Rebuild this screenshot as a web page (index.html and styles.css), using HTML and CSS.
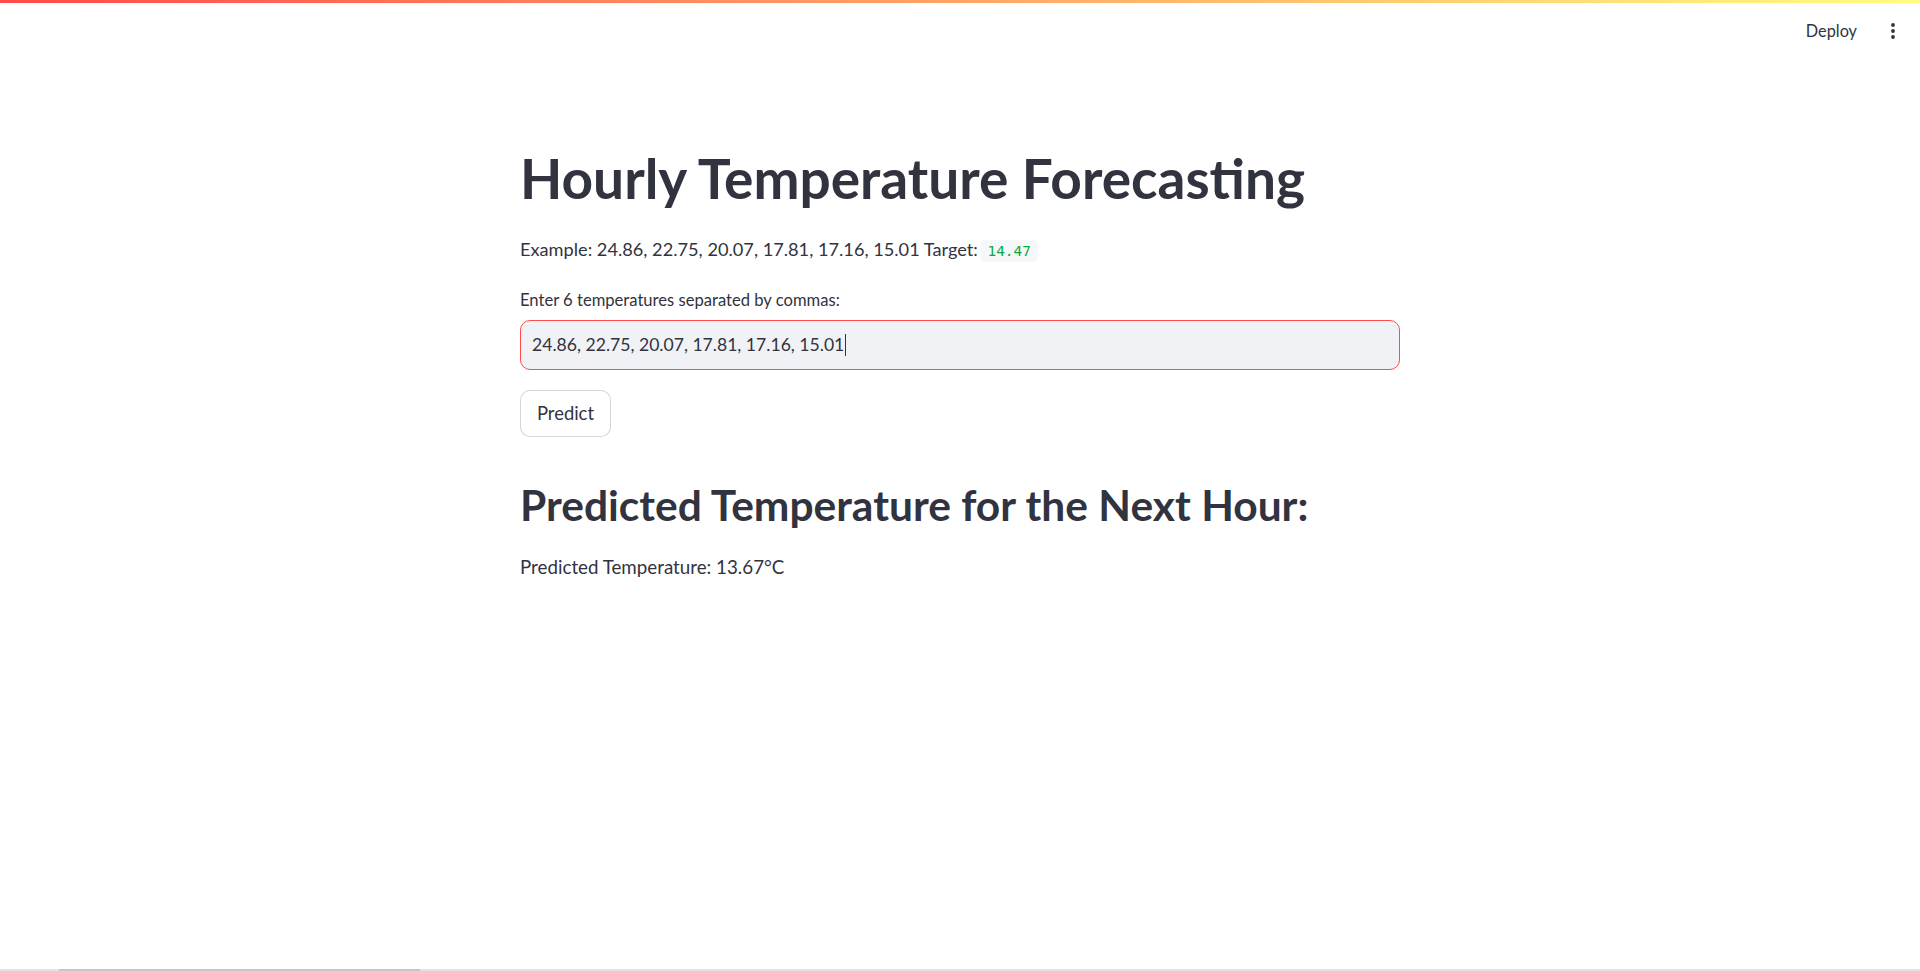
FILE: index.html
```html
<!DOCTYPE html>
<html lang="en">
<head>
<meta charset="utf-8">
<title>Hourly Temperature Forecasting</title>
<link rel="stylesheet" href="styles.css">
</head>
<body>
<div class="decoration"></div>
<header class="app-header">
  <span class="deploy">Deploy</span>
  <span class="menu" aria-label="Main menu">
    <svg width="4" height="16" viewBox="0 0 4 16"><circle cx="2" cy="2" r="1.9" fill="#31333F"/><circle cx="2" cy="8" r="1.9" fill="#31333F"/><circle cx="2" cy="14" r="1.9" fill="#31333F"/></svg>
  </span>
</header>
<main class="block">
  <h1 class="title">Hourly Temperature Forecasting</h1>
  <p class="example">Example: 24.86, 22.75, 20.07, 17.81, 17.16, 15.01 Target: <code class="code">14.47</code></p>
  <label class="label">Enter 6 temperatures separated by commas:</label>
  <div class="input" role="textbox">24.86, 22.75, 20.07, 17.81, 17.16, 15.01<span class="caret"></span></div>
  <button class="btn" type="button">Predict</button>
  <h2 class="subtitle">Predicted Temperature for the Next Hour:</h2>
  <p class="result">Predicted Temperature: 13.67°C</p>
</main>
<div class="hscroll"><div class="hscroll-thumb"></div></div>
</body>
</html>
```
FILE: styles.css
```css
html, body {
  margin: 0;
  padding: 0;
  background: #ffffff;
}
body {
  font-family: Lato, "Noto Sans", sans-serif;
  color: #31333F;
  min-height: 971px;
}
.decoration {
  height: 3px;
  background: linear-gradient(90deg, rgb(255, 75, 75), rgb(255, 253, 128));
}
.app-header {
  height: 56px;
  display: flex;
  justify-content: flex-end;
  align-items: center;
  padding-right: 25px;
}
.deploy {
  font-size: 16.3px;
  line-height: 20px;
  margin-right: 34px;
}
.menu {
  display: flex;
  align-items: center;
}
.block {
  width: 880px;
  margin: 0 auto;
  padding-top: 86px;
  display: flex;
  flex-direction: column;
  align-items: flex-start;
}
.title {
  margin: 0;
  font-size: 55px;
  line-height: 66px;
  font-weight: 700;
  letter-spacing: 0;
}
.example {
  margin: 23.5px 0 0;
  font-size: 18.2px;
  line-height: 29.4px;
}
.code {
  font-family: "DejaVu Sans Mono", "Liberation Mono", monospace;
  font-size: 14.4px;
  color: rgb(9, 171, 59);
  background: rgb(246, 247, 249);
  padding: 3px 7px 3px 8px;
  margin-left: -3px;
  border-radius: 5px;
}
.label {
  margin-top: 22px;
  font-size: 16.6px;
  line-height: 25.6px;
}
.input {
  box-sizing: border-box;
  margin-top: 6.4px;
  width: 880px;
  height: 50px;
  border: 1px solid rgb(255, 75, 75);
  border-radius: 10px;
  background: rgb(240, 242, 246);
  padding: 0 11px;
  font-size: 17.6px;
  line-height: 23px;
  display: flex;
  align-items: center;
}
.caret {
  display: inline-block;
  width: 1px;
  height: 22px;
  background: #31333F;
  margin-left: 1px;
}
.btn {
  box-sizing: border-box;
  margin-top: 20px;
  width: 91px;
  height: 47px;
  border: 1px solid rgba(49, 51, 63, 0.2);
  border-radius: 10px;
  background: #ffffff;
  color: #31333F;
  font-family: inherit;
  font-size: 18.4px;
  line-height: 23px;
  padding: 0;
}
.subtitle {
  margin: 43px 0 0;
  font-size: 42.5px;
  line-height: 49.7px;
  font-weight: 700;
}
.result {
  margin: 22.5px 0 0;
  font-size: 18.75px;
  line-height: 29.4px;
}
.hscroll {
  position: fixed;
  left: 0;
  right: 0;
  bottom: 0;
  height: 2px;
  background: #e2e2e2;
}
.hscroll-thumb {
  margin-left: 59px;
  width: 361px;
  height: 2px;
  background: #c6c6c6;
}
```
